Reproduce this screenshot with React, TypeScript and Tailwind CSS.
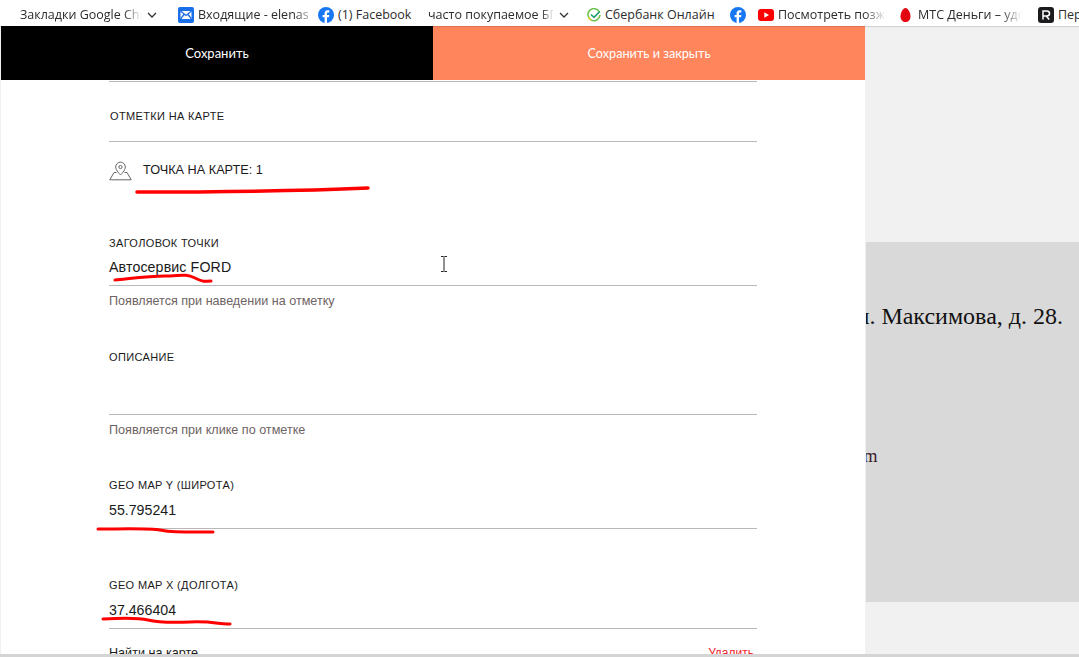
import React from "react";

const Fb = () => (
  <svg width="16" height="16" viewBox="0 0 16 16" className="shrink-0">
    <circle cx="8" cy="8" r="8" fill="#1877f2" />
    <path d="M11 10.300l.4-2.300H9V6.600c0-.7.3-1.200 1.300-1.200h1V3.300S10.400 3.200 9.600 3.200C7.800 3.200 6.600 4.300 6.600 6.300V8H4.600v2.300h2V16h2.400v-5.700z" fill="#fff" />
  </svg>
);

const Mail = () => (
  <svg width="16" height="16" viewBox="0 0 16 16" className="shrink-0">
    <rect width="16" height="16" rx="2" fill="#1a6fe8" />
    <rect x="2.500" y="4" width="11" height="8" fill="#fff" />
    <path d="M2.500 4L8 8.500 13.500 4M2.500 12L6 7.500M13.500 12L10 7.500" fill="none" stroke="#1a6fe8" strokeWidth="1.300" />
  </svg>
);

const Sber = () => (
  <svg width="14" height="14" viewBox="0 0 14 14" className="shrink-0">
    <path d="M12.500 4.200A6 6 0 1 0 13 7" fill="none" stroke="#6cc04a" strokeWidth="1.500" />
    <path d="M1.600 9.500A6 6 0 0 0 4 12.200" fill="none" stroke="#f0d020" strokeWidth="1.500" />
    <path d="M4 6.500L7 9.300 12.800 3.500" fill="none" stroke="#1f9e6e" strokeWidth="1.600" />
  </svg>
);

const Yt = () => (
  <svg width="16" height="12" viewBox="0 0 16 12" className="shrink-0">
    <rect width="16" height="12" rx="3" fill="#f00" />
    <path d="M6.300 3.200L11 6 6.300 8.800z" fill="#fff" />
  </svg>
);

const Mts = () => (
  <svg width="11" height="14" viewBox="0 0 11 14" className="shrink-0">
    <path d="M5.500 0C8 0 10.500 4.500 10.500 8.500 10.500 12 8.200 14 5.500 14S.5 12 .5 8.500C.5 4.500 3 0 5.500 0z" fill="#e30611" />
  </svg>
);

const Rev = () => (
  <svg width="16" height="16" viewBox="0 0 16 16" className="shrink-0">
    <rect width="16" height="16" rx="3" fill="#1c1c1e" />
    <path d="M5 12.500V4h3.700c1.700 0 2.800 1 2.800 2.500S10.400 9 8.700 9H5M8.200 9l3 3.500" fill="none" stroke="#fff" strokeWidth="1.500" />
  </svg>
);

const Chevron = () => (
  <svg width="10" height="6" viewBox="0 0 10 6" className="shrink-0">
    <path d="M1 1l4 4 4-4" fill="none" stroke="#333" strokeWidth="1.300" />
  </svg>
);

function Bookmark({ icon, text, w, fade, gap = "gap-[4px]" }: { icon?: React.ReactNode; text: string; w: string; fade?: boolean; gap?: string }) {
  return (
    <div className={`flex items-center shrink-0 ${gap} ${w}`}>
      {icon}
      <span
        className={`overflow-hidden whitespace-nowrap flex-1 ${
          fade ? "[mask-image:linear-gradient(to_right,black_80%,transparent)]" : ""
        }`}
      >
        {text}
      </span>
    </div>
  );
}

const Label = ({ children, className = "" }: { children: React.ReactNode; className?: string }) => (
  <div className={`text-[11px] leading-[14px] tracking-[0.35px] text-[#1a1a1a] uppercase ${className}`}>{children}</div>
);

const Hint = ({ children, className = "" }: { children: React.ReactNode; className?: string }) => (
  <div className={`text-[12.6px] leading-[16px] text-[#6e6363] ${className}`}>{children}</div>
);

const Value = ({ children, className = "" }: { children: React.ReactNode; className?: string }) => (
  <div className={`text-[14.2px] leading-[18px] text-[#1a1a1a] ${className}`}>{children}</div>
);

export default function App() {
  return (
    <div className="relative w-[1079px] h-[657px] overflow-hidden flex flex-col bg-[#f1f1f1] font-['Liberation_Sans',sans-serif]">
      <div className="h-[26px] shrink-0 bg-white flex items-center pl-[20px] pt-[4px] text-[12.5px] text-[#2c2c2c] font-['Open_Sans',sans-serif] z-10 shadow-[0_1px_1px_rgba(0,0,0,0.12)]">
        <div className="flex items-center w-[158px] shrink-0">
          <span className="w-[122px] overflow-hidden whitespace-nowrap [mask-image:linear-gradient(to_right,black_85%,transparent)]">Закладки Google Chrome</span>
          <span className="ml-[5px]"><Chevron /></span>
        </div>
        <Bookmark icon={<Mail />} text="Входящие - elenas" w="w-[140px]" fade />
        <Bookmark icon={<Fb />} text="(1) Facebook" w="w-[110px]" />
        <div className="flex items-center w-[159px] shrink-0">
          <span className="w-[126px] overflow-hidden whitespace-nowrap [mask-image:linear-gradient(to_right,black_90%,transparent)]">часто покупаемое БГ</span>
          <span className="ml-[5px]"><Chevron /></span>
        </div>
        <Bookmark icon={<Sber />} text="Сбербанк Онлайн" w="w-[143px]" />
        <div className="w-[28px] shrink-0"><Fb /></div>
        <Bookmark icon={<Yt />} text="Посмотреть позже" w="w-[142px] pr-[14px]" fade />
        <Bookmark icon={<Mts />} text="МТС Деньги – удобно" w="w-[138px] pr-[16px]" fade gap="gap-[7px]" />
        <Bookmark icon={<Rev />} text="Перевод" w="w-[60px]" />
      </div>

      <div className="flex-1 flex min-h-0">
        <div className="w-[866px] shrink-0 pl-[1px] bg-[#f0f0f0]">
          <div className="w-[864px] h-full bg-white overflow-hidden">
            <div className="flex h-[54px] text-white font-['Lato',sans-serif]">
              <div className="flex-1 bg-black flex items-center justify-center text-[13px] pt-[2px]">Сохранить</div>
              <div className="flex-1 bg-[#ff855d] flex items-center justify-center text-[12.7px] pt-[2px]">Сохранить и закрыть</div>
            </div>
            <div className="ml-[108px] w-[648px] mt-px">
              <div className="border-t border-b border-[#b8b8b8] h-[61px] pt-[27px]">
                <Label className="pl-px">Отметки на карте</Label>
              </div>
              <div className="flex items-center h-[38px] mt-[10px]">
                <svg width="23" height="20" viewBox="0 0 23 20" className="shrink-0" fill="none" stroke="#666" strokeWidth="1">
                  <path d="M11.500 1.200a4.800 4.800 0 0 0-4.800 4.800c0 3.300 4.800 8 4.800 8s4.800-4.700 4.800-8a4.800 4.800 0 0 0-4.800-4.800z" />
                  <circle cx="11.500" cy="6" r="1.600" />
                  <path d="M7.500 11.500H5L.8 18.800h21.400L18 11.500h-2.500" />
                </svg>
                <span className="ml-[11px] text-[12.7px] text-[#1a1a1a]">ТОЧКА НА КАРТЕ: 1</span>
              </div>

              <Label className="mt-[46px]">Заголовок точки</Label>
              <Value className="mt-[8px] tracking-[0.12px]">Автосервис FORD</Value>
              <div className="border-b border-[#b8b8b8] h-[10px]" />
              <Hint className="mt-[7px]">Появляется при наведении на отметку</Hint>

              <Label className="mt-[41px]">Описание</Label>
              <div className="border-b border-[#b8b8b8] h-[51px]" />
              <Hint className="mt-[7px]">Появляется при клике по отметке</Hint>

              <Label className="mt-[40px]">Geo map Y (широта)</Label>
              <Value className="mt-[9px]">55.795241</Value>
              <div className="border-b border-[#b8b8b8] h-[10px]" />

              <Label className="mt-[49px]">Geo map X (долгота)</Label>
              <Value className="mt-[9px]">37.466404</Value>
              <div className="border-b border-[#b8b8b8] h-[10px]" />

              <div className="flex justify-between items-baseline mt-[16px] leading-[16px] pr-[3px]">
                <span className="text-[12.6px] text-[#1a1a1a]">Найти на карте</span>
                <span className="text-[12px] text-[#f5222d]">Удалить</span>
              </div>
            </div>
          </div>
        </div>

        <div className="flex-1 min-w-0 overflow-hidden pt-[216px]">
          <div className="h-[360px] bg-[#d9d9d9] font-['Liberation_Serif',serif] relative overflow-hidden">
            <div className="pt-[58px] pr-[16px] text-[24px] leading-[32px] text-[#111] whitespace-nowrap flex justify-end">ул. Максимова, д. 28.</div>
            <div className="mt-[112px] ml-[-24px] text-[18px] leading-[24px] text-[#3a1a2a] whitespace-nowrap">.com</div>
          </div>
        </div>
      </div>

      <div className="absolute left-0 right-0 bottom-0 h-[3px] bg-[#d4d4d4]" />

      <svg className="absolute left-0 top-0 pointer-events-none" width="1079" height="657" viewBox="0 0 1079 657" fill="none" stroke="#f00" strokeLinecap="round">
        <path d="M137 192C200 192 300 191 368 188" strokeWidth="3.500" />
        <path d="M115 280C135 278 150 276 165 276S185 273 195 278 205 281 211 281" strokeWidth="3" />
        <path d="M98 529C120 529 150 528 160 530S175 532 213 532" strokeWidth="3" />
        <path d="M103 619C120 618 140 618 148 620S165 623 190 622 220 625 230 624" strokeWidth="3" />
      </svg>
      <svg className="absolute left-[440px] top-[256px] pointer-events-none" width="8" height="16" viewBox="0 0 8 16" fill="none" stroke="#222" strokeWidth="1">
        <path d="M1 .5H3.500Q4 .5 4 1.500V14.500Q4 15.500 3.500 15.500H1M7 .5H4.500M7 15.500H4.500" />
      </svg>
    </div>
  );
}
